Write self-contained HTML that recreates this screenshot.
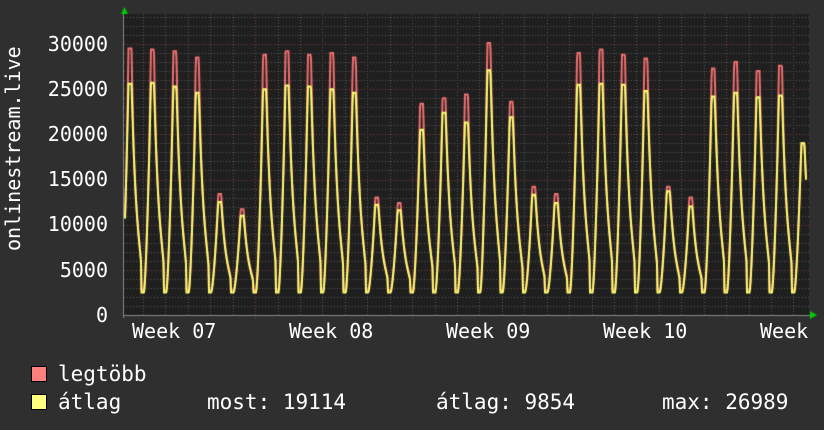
<!DOCTYPE html>
<html><head><meta charset="utf-8"><style>
html,body{margin:0;padding:0;background:#2f2f2f;width:824px;height:430px;overflow:hidden}
canvas{position:absolute;left:0;top:0}
.t{position:absolute;font-family:"DejaVu Sans Mono","Liberation Mono",monospace;color:#fff;white-space:pre;line-height:1}
.y{font-size:20px;right:716px;text-align:right}
.x{font-size:20px;top:321px}
.l{font-size:21px}
.sw{position:absolute;width:14px;height:14px;border:1px solid #000}
</style></head><body>
<canvas id="c" width="824" height="430"></canvas>
<div class="t y" style="top:34px">30000</div>
<div class="t y" style="top:79px">25000</div>
<div class="t y" style="top:124px">20000</div>
<div class="t y" style="top:169px">15000</div>
<div class="t y" style="top:214px">10000</div>
<div class="t y" style="top:260px">5000</div>
<div class="t y" style="top:305px">0</div>
<div class="t" style="font-size:20px;left:-72px;top:156px;transform:rotate(-90deg);width:170px;text-align:center">onlinestream.live</div>
<div class="t x" style="left:132px">Week 07</div>
<div class="t x" style="left:289px">Week 08</div>
<div class="t x" style="left:446px">Week 09</div>
<div class="t x" style="left:603px">Week 10</div>
<div class="t x" style="left:760px">Week</div>
<div class="sw" style="left:31px;top:366px;background:#ff7f7f"></div>
<div class="sw" style="left:31px;top:394px;background:#ffff7f"></div>
<div class="t l" style="left:58px;top:364px">legtöbb</div>
<div class="t l" style="left:58px;top:392px">átlag</div>
<div class="t l" style="left:207px;top:392px">most: 19114</div>
<div class="t l" style="left:436px;top:392px">átlag: 9854</div>
<div class="t l" style="left:662px;top:392px">max: 26989</div>
<script>
var c=document.getElementById('c').getContext('2d');
var L=124,R=809,T=14,B=315,Y0=315,K=0.009033;
function Y(v){return Y0-v*K;}
c.fillStyle='#1f1f1f';c.fillRect(L,T,R-L,B-T);
c.lineWidth=1;c.setLineDash([1,2]);
c.strokeStyle='#555';
for(var v=1000;v<=33000;v+=1000){if(v%5000==0)continue;var y=Math.round(Y(v))+0.5;if(y<T)continue;c.beginPath();c.moveTo(L,y);c.lineTo(R,y);c.stroke();}
for(var x=143;x<R;x+=22.43){var xx=Math.round(x)+0.5;c.beginPath();c.moveTo(xx,T);c.lineTo(xx,B);c.stroke();}
c.strokeStyle='#7a3a3a';
for(var v=5000;v<=30000;v+=5000){var y=Math.round(Y(v))+0.5;c.beginPath();c.moveTo(L,y);c.lineTo(R,y);c.stroke();}
[98,255,412,569,726].forEach(function(x){if(x<L)return;c.beginPath();c.moveTo(x+0.5,T);c.lineTo(x+0.5,B+3);c.stroke();});
c.setLineDash([]);
c.strokeStyle='#888';c.beginPath();c.moveTo(L,B+0.5);c.lineTo(R+4,B+0.5);c.moveTo(L-0.5,B+3);c.lineTo(L-0.5,T-2);c.stroke();
c.fillStyle='#00cc00';
c.beginPath();c.moveTo(121,14);c.lineTo(128,14);c.lineTo(124.5,7);c.fill();
c.beginPath();c.moveTo(810,311);c.lineTo(810,319);c.lineTo(817,315);c.fill();
var P=[[29500,25600],[29400,25700],[29200,25300],[28500,24600],[13400,12500],[11700,11000],[28800,25000],[29200,25400],[28800,25300],[29000,25000],[28500,24600],[13000,12200],[12400,11600],[23400,20500],[24000,22400],[24400,21300],[30100,27100],[23600,21900],[14200,13300],[13400,12400],[29000,25500],[29400,25600],[28800,25500],[28400,24800],[14200,13700],[13000,12000],[27300,24200],[28000,24600],[27000,24100],[27600,24300],[19000,19000]];
var X0=130,D=22.43;
function yv(x){
 var i=Math.round((x-X0)/D);if(i<0)i=0;if(i>30)i=30;
 var px=X0+i*D, d=x-px, pk=P[i][1], mn=2500;
 var f;
 if(d<-1.5){var s=(-d-1.5)/7;if(s>1)s=1;f=Math.pow(1-s,1.5);}
 else if(d<=1.5){f=1;}
 else{var s=(d-1.5)/12;if(s>1)s=1;f=(1-s)*(0.78+0.22*(1-s))*(1-0.25*Math.sin(s*3.14));f=Math.max(0,f);}
 return [mn+(pk-mn)*f,i,d];
}
function rv(x){
 var r=yv(x),v=r[0],i=r[1],d=r[2];
 var ex=P[i][0]-P[i][1];
 var sp=0; var ad=Math.abs(d);
 if(ad<=1.5)sp=1;else if(ad<3.5)sp=1-(ad-1.5)/2;
 return v+250*(1-sp)+ex*sp;
}
function draw(fn,col){
 c.strokeStyle=col;c.lineWidth=2;c.beginPath();
 for(var x=125;x<=806;x+=0.5){var v=fn(x);var y=Y(v);if(x==125)c.moveTo(x,y);else c.lineTo(x,y);}
 c.stroke();
}
draw(rv,'#f07070');draw(function(x){return yv(x)[0];},'#ffff70');
</script>
</body></html>
